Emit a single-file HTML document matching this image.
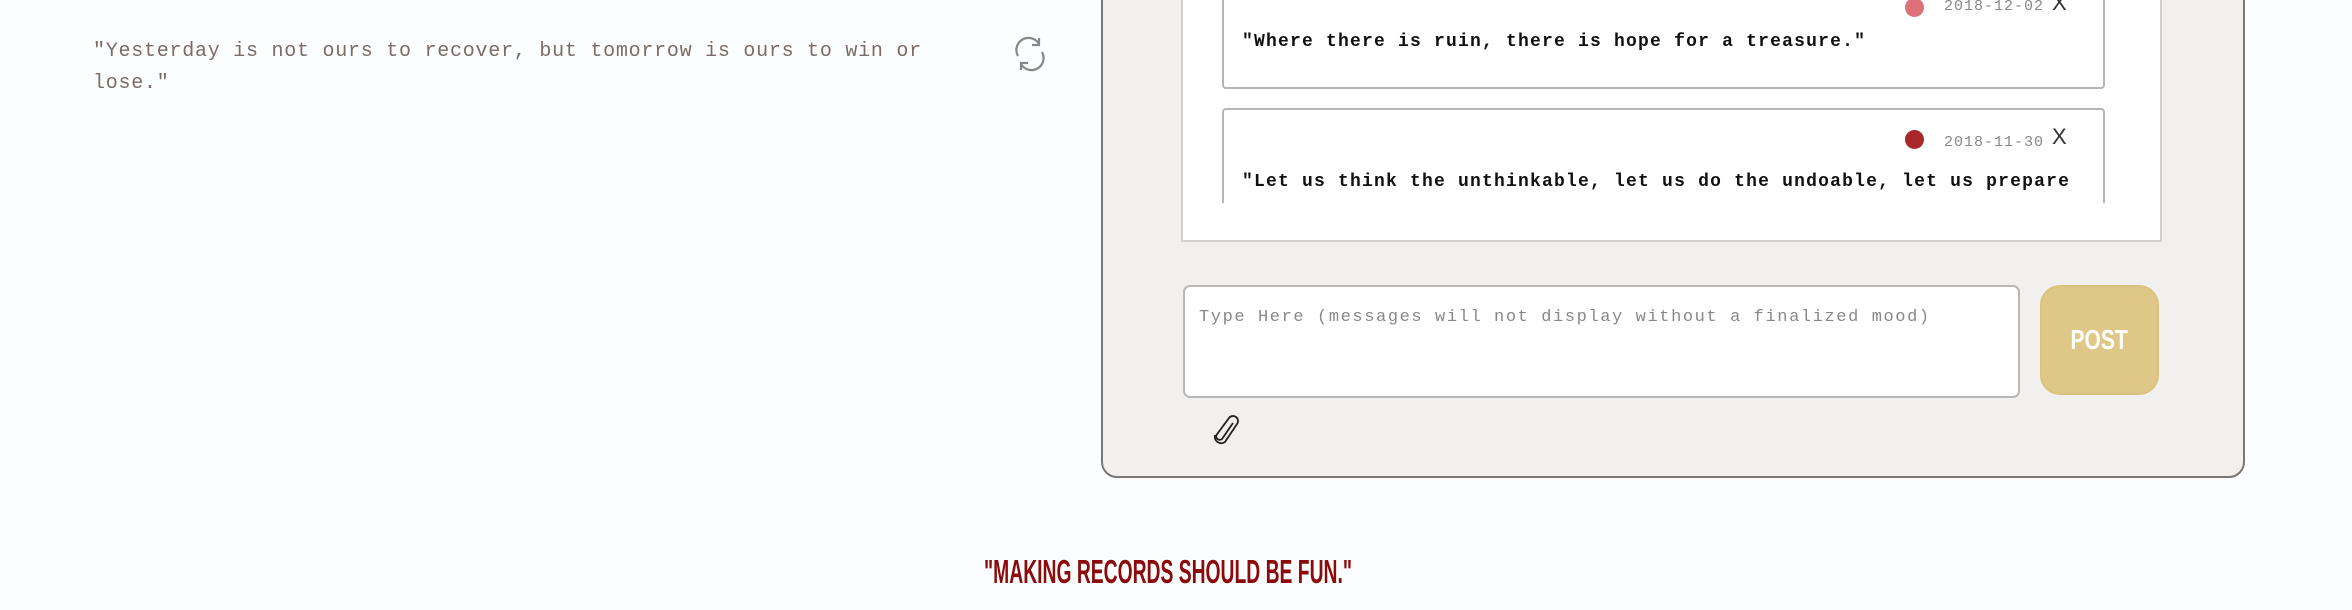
<!DOCTYPE html>
<html><head><meta charset="utf-8"><style>
body{margin:0;width:2352px;height:610px;background:#fcfdfe;position:relative;overflow:hidden;font-family:"Liberation Mono",monospace}
.q{position:absolute;left:93px;top:36px;width:900px;font-size:20px;letter-spacing:0.75px;line-height:32px;color:#7b6d66}
.panel{position:absolute;left:1101px;top:-40px;width:1140px;height:514px;background:#f1f0ee;border:2px solid #7a7775;border-radius:16px}
.list{position:absolute;left:1181px;top:-10px;width:977px;height:250px;background:#fff;border:2px solid #d0d0d0;border-top:none}
.scroll{position:absolute;left:1181px;top:0;width:980px;height:203px;overflow:hidden}
.card{position:absolute;left:41px;width:879px;background:#fff;border:2px solid #b5b5b5;border-radius:4px}
.dot{position:absolute;width:19px;height:19px;border-radius:50%}
.date{position:absolute;font-size:15px;color:#888;letter-spacing:1px}
.x{position:absolute;font-family:"Liberation Sans",sans-serif;font-size:22px;color:#333}
.t{position:absolute;left:18px;font-weight:bold;font-size:18px;letter-spacing:1.2px;color:#111;white-space:nowrap}
.ta{position:absolute;left:1183px;top:285px;width:833px;height:109px;background:#fff;border:2px solid #b8b8b8;border-radius:7px}
.ph{position:absolute;left:14px;top:21px;font-size:17px;letter-spacing:1.6px;color:#888;white-space:nowrap}
.post{position:absolute;left:2040px;top:285px;width:119px;height:110px;background:#dfc887;border:2px solid #d8c37f;border-radius:20px;box-sizing:border-box;color:#fff;font-family:"Liberation Sans Narrow","Liberation Sans",sans-serif;font-weight:bold;font-size:28px;text-align:center;line-height:106px}
.post span{display:inline-block;transform:scaleX(0.75)}
.foot{position:absolute;left:668px;top:553px;width:1000px;text-align:center;color:#8b0a0a;font-family:"Liberation Sans Narrow","Liberation Sans",sans-serif;font-weight:bold;font-size:33px;transform:scaleX(0.585);transform-origin:center;white-space:nowrap}
</style></head><body>
<div class="q">"Yesterday is not ours to recover, but tomorrow is ours to win or lose."</div>
<svg style="position:absolute;left:1010px;top:34px" width="40" height="40" viewBox="0 0 40 40" fill="none" stroke="#888" stroke-width="2.2"><path d="M8 22 A12 12 0 0 1 29 10"/><path d="M29 4 L29 11 L22 11"/><path d="M32 18 A12 12 0 0 1 11 30"/><path d="M11 36 L11 29 L18 29"/></svg>
<div class="panel"></div>
<div class="list"></div>
<div class="scroll">
 <div class="card" style="top:-40px;height:125px">
  <div class="dot" style="left:681px;top:36px;background:#de707a"></div>
  <div class="date" style="left:720px;top:36px">2018-12-02</div>
  <div class="x" style="left:828px;top:28px">X</div>
  <div class="t" style="top:70px">"Where there is ruin, there is hope for a treasure."</div>
 </div>
 <div class="card" style="top:108px;height:200px">
  <div class="dot" style="left:681px;top:20px;background:#a82727"></div>
  <div class="date" style="left:720px;top:24px">2018-11-30</div>
  <div class="x" style="left:828px;top:14px">X</div>
  <div class="t" style="top:56px;line-height:32px">"Let us think the unthinkable, let us do the undoable, let us prepare<br>to grapple with the ineffable itself, and see if we may not eff it after all."</div>
 </div>
</div>
<div class="ta"><div class="ph">Type Here (messages will not display without a finalized mood)</div></div>
<div class="post"><span>POST</span></div>
<svg style="position:absolute;left:1213px;top:415px" width="28" height="32" viewBox="0 0 28 32" fill="none" stroke="#222" stroke-width="1.8"><path d="M20 8 L9 24 A3.5 3.5 0 0 1 3.5 20 L16 3 A5 5 0 0 1 24 9 L12 27 A6.5 6.5 0 0 1 2 20"/></svg>
<div class="foot">"MAKING RECORDS SHOULD BE FUN."</div>
</body></html>
